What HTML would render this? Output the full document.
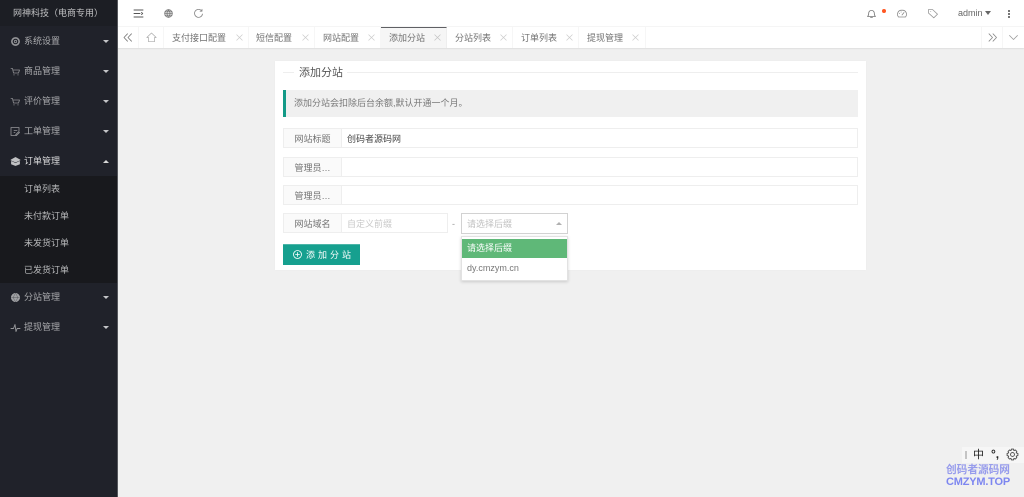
<!DOCTYPE html>
<html lang="zh"><head><meta charset="utf-8"><title>添加分站</title>
<style>
*{box-sizing:border-box}
html,body{margin:0;padding:0;width:1024px;height:497px;overflow:hidden;background:#f0f0f0;font-family:"Liberation Sans","Noto Sans CJK SC",sans-serif;font-size:9px;color:#666}
#wrap{position:absolute;left:0;top:0;width:1024px;height:497px;overflow:hidden;filter:blur(.3px)}
.a{position:absolute;white-space:nowrap}
#side{left:0;top:0;width:118px;height:497px;background:#20222a;border-right:1px solid #55575c}
.mi{position:absolute;left:24px;color:#aaabae;font-size:9px;line-height:12px}
.sub{position:absolute;left:24px;color:#b8b9bb;font-size:9px;line-height:12px}
.car{position:absolute;left:103px;width:0;height:0;border-left:3.5px solid transparent;border-right:3.5px solid transparent;border-top:3.5px solid #c4c5c8}
.car.up{border-top:0;border-bottom:3.5px solid #d8d8d8}
svg{position:absolute;fill:none;stroke-linecap:round;stroke-linejoin:round}
.tab{position:absolute;top:27px;height:21px;line-height:22px;border-right:1px solid #f6f6f6;color:#707070;font-size:9px}
.x{position:absolute;top:7px;width:7px;height:7px}
.lab{position:absolute;left:283px;width:59px;height:20px;background:#fafafa;border:1px solid #eeeeee;color:#707070;font-size:9px;line-height:20px;text-align:center}
.inp{position:absolute;left:341px;height:20px;background:#fff;border:1px solid #eeeeee;font-size:9px;line-height:20px;padding-left:5px;color:#444}
</style></head><body><div id="wrap">

<div class="a" style="left:117px;top:0;width:907px;height:27px;background:#fff;border-bottom:1px solid #f5f5f5"></div>
<div class="a" style="left:117px;top:27px;width:907px;height:21px;background:#fff;box-shadow:0 1px 1px rgba(0,0,0,.07)"></div>

<div id="side" class="a">
  <div class="a" style="left:0;top:0;width:117px;height:26px;background:#1c1e24"></div>
  <div class="a" style="left:13px;top:7px;color:#c0c1c3;font-size:9px;line-height:12px">网神科技（电商专用）</div>

  <svg style="left:10px;top:36px" width="11" height="11" viewBox="0 0 11 11" stroke="#96979a" stroke-width="1.6"><circle cx="5.500" cy="5.500" r="3.600" stroke-dasharray="1.500 .7"/><circle cx="5.500" cy="5.500" r="1.200" stroke-width=".8"/></svg>
  <div class="mi" style="top:35px">系统设置</div><div class="car" style="top:40px"></div>

  <svg style="left:10px;top:66px" width="11" height="11" viewBox="0 0 11 11" stroke="#8e8f92" stroke-width=".8"><path d="M1 2.500h1.500l1 4.500h5l1-3H3"/><path d="M4 8.500v.6M8 8.500v.6"/></svg>
  <div class="mi" style="top:65px">商品管理</div><div class="car" style="top:70px"></div>

  <svg style="left:10px;top:96px" width="11" height="11" viewBox="0 0 11 11" stroke="#8e8f92" stroke-width=".8"><path d="M1 2.500h1.500l1 4.500h5l1-3H3"/><path d="M4 8.500v.6M8 8.500v.6"/></svg>
  <div class="mi" style="top:95px">评价管理</div><div class="car" style="top:100px"></div>

  <svg style="left:10px;top:126px" width="11" height="11" viewBox="0 0 11 11" stroke="#96979a" stroke-width=".8"><path d="M6 9.500H1v-8h8V5"/><path d="M4 4.500h3M4 6.500h1M6.500 9.500l3-3-.8-.8-3 3z"/></svg>
  <div class="mi" style="top:125px">工单管理</div><div class="car" style="top:130px"></div>

  <svg style="left:10px;top:156px" width="11" height="11" viewBox="0 0 11 11" stroke="#c0c1c3" stroke-width=".8"><path d="M5.500 1.500L10 4 5.500 6 1 4z" fill="#c0c1c3"/><path d="M1.500 5.500v2.500l4 1.500 4-1.500V5.500l-4 2z" fill="#c0c1c3"/></svg>
  <div class="mi" style="top:155px;color:#dcdcdd">订单管理</div><div class="car up" style="top:160px"></div>

  <div class="a" style="left:0;top:176px;width:117px;height:107px;background:#18191d"></div>
  <div class="sub" style="top:183px">订单列表</div>
  <div class="sub" style="top:210px">未付款订单</div>
  <div class="sub" style="top:237px">未发货订单</div>
  <div class="sub" style="top:264px">已发货订单</div>

  <svg style="left:10px;top:292px" width="11" height="11" viewBox="0 0 11 11" stroke="#55575c" stroke-width=".5"><circle cx="5.500" cy="5.500" r="4.300" fill="#a0a1a4" stroke="#a0a1a4"/><path d="M1.500 5.500h8M5.500 1.500c-2.500 2.500-2.500 5.500 0 8M5.500 1.500c2.500 2.500 2.500 5.500 0 8"/></svg>
  <div class="mi" style="top:291px">分站管理</div><div class="car" style="top:296px"></div>

  <svg style="left:10px;top:322px" width="11" height="11" viewBox="0 0 11 11" stroke="#96979a" stroke-width=".9"><path d="M1 6.500h2.500L5 2.500l1 7 1.200-3H10"/></svg>
  <div class="mi" style="top:321px">提现管理</div><div class="car" style="top:326px"></div>
</div>

<!-- Header icons -->
<svg style="left:133px;top:8px" width="11" height="11" viewBox="0 0 11 11" stroke="#555" stroke-width=".9"><path d="M1 2h9M1 5.500h6M1 9h9M8.500 4.500l1.200 1-1.200 1"/></svg>
<svg style="left:163px;top:8px" width="11" height="11" viewBox="0 0 11 11" stroke="#777" stroke-width=".8"><circle cx="5.500" cy="5.500" r="3.800"/><path d="M1.700 5.500h7.600M1.900 3.800h7.200M1.900 7.200h7.200M5.500 1.700c-2 2.500-2 5.100 0 7.600M5.500 1.700c2 2.500 2 5.100 0 7.600"/></svg>
<svg style="left:193px;top:8px" width="11" height="11" viewBox="0 0 11 11" stroke="#888" stroke-width=".8"><path d="M8.800 3A4 4 0 1 0 9.500 6"/><path d="M9 1.300V3.200H7.100"/></svg>

<svg style="left:866px;top:8px" width="11" height="11" viewBox="0 0 11 11" stroke="#777" stroke-width=".8"><path d="M1.500 8.500c1-.8 1.200-1.500 1.200-3.300a2.800 2.800 0 0 1 5.600 0c0 1.800.2 2.500 1.200 3.300zM4.500 9.500h2"/></svg>
<div class="a" style="left:882px;top:9px;width:4px;height:4px;border-radius:50%;background:#ff5722"></div>
<svg style="left:896px;top:8px" width="12" height="11" viewBox="0 0 12 11" stroke="#888" stroke-width=".8"><path d="M2.500 9C.5 6.500 1.500 2.200 6 2.200s5.500 4.300 3.500 6.800zM6 7l2-2.500M3.300 5.500h.3M5 4h.3"/></svg>
<svg style="left:927px;top:8px" width="12" height="11" viewBox="0 0 12 11" stroke="#999" stroke-width=".8"><path d="M1.500 1.500h4l5 4.700-3.700 3.600-5.300-4.700zM3.600 3.500h.2"/></svg>
<div class="a" style="left:958px;top:7px;color:#666;font-size:9px;line-height:12px">admin</div>
<div class="a" style="left:985px;top:11px;width:0;height:0;border-left:3.500px solid transparent;border-right:3.500px solid transparent;border-top:4px solid #666"></div>
<div class="a" style="left:1008px;top:10px;width:2px;height:2px;background:#777;box-shadow:0 3px 0 #777,0 6px 0 #777"></div>

<!-- Tabs -->
<svg style="left:123px;top:32px" width="10" height="11" viewBox="0 0 10 11" stroke="#777" stroke-width=".8"><path d="M4.500 1.800L1 5.500l3.500 3.700M8.500 1.800L5 5.500l3.500 3.700"/></svg>
<div class="a" style="left:138px;top:27px;width:1px;height:21px;background:#f6f6f6"></div>
<svg style="left:146px;top:32px" width="11" height="11" viewBox="0 0 11 11" stroke="#aaa" stroke-width=".7"><path d="M.8 5.500L5.500 1l4.700 4.500H8.500v4.200h-6V5.500z"/></svg>
<div class="a" style="left:163px;top:27px;width:1px;height:21px;background:#f6f6f6"></div>

<div class="tab a" style="left:164px;width:85px"><span style="position:absolute;left:8px">支付接口配置</span><svg class="x" style="left:72px" viewBox="0 0 7 7" stroke="#ccc" stroke-width=".7"><path d="M.7.700l5.600 5.600M6.300.700L.7 6.300"/></svg></div>
<div class="tab a" style="left:249px;width:66px"><span style="position:absolute;left:7px">短信配置</span><svg class="x" style="left:53px" viewBox="0 0 7 7" stroke="#ccc" stroke-width=".7"><path d="M.7.700l5.600 5.600M6.300.700L.7 6.300"/></svg></div>
<div class="tab a" style="left:315px;width:66px"><span style="position:absolute;left:8px">网站配置</span><svg class="x" style="left:53px" viewBox="0 0 7 7" stroke="#ccc" stroke-width=".7"><path d="M.7.700l5.600 5.600M6.300.700L.7 6.300"/></svg></div>
<div class="tab a" style="left:381px;width:66px;background:#f6f6f6;border-top:1px solid #5f6064;line-height:20px;border-right:1px solid #eee"><span style="position:absolute;left:8px">添加分站</span><svg class="x" style="left:53px;top:6px" viewBox="0 0 7 7" stroke="#c4c4c4" stroke-width=".7"><path d="M.7.700l5.600 5.600M6.300.700L.7 6.300"/></svg></div>
<div class="tab a" style="left:447px;width:66px"><span style="position:absolute;left:8px">分站列表</span><svg class="x" style="left:53px" viewBox="0 0 7 7" stroke="#ccc" stroke-width=".7"><path d="M.7.700l5.600 5.600M6.300.700L.7 6.300"/></svg></div>
<div class="tab a" style="left:513px;width:66px"><span style="position:absolute;left:8px">订单列表</span><svg class="x" style="left:53px" viewBox="0 0 7 7" stroke="#ccc" stroke-width=".7"><path d="M.7.700l5.600 5.600M6.300.700L.7 6.300"/></svg></div>
<div class="tab a" style="left:579px;width:67px"><span style="position:absolute;left:8px">提现管理</span><svg class="x" style="left:53px" viewBox="0 0 7 7" stroke="#ccc" stroke-width=".7"><path d="M.7.700l5.600 5.600M6.300.700L.7 6.300"/></svg></div>

<div class="a" style="left:981px;top:27px;width:1px;height:21px;background:#f6f6f6"></div>
<div class="a" style="left:1002px;top:27px;width:1px;height:21px;background:#f6f6f6"></div>
<svg style="left:988px;top:32px" width="10" height="11" viewBox="0 0 10 11" stroke="#888" stroke-width=".8"><path d="M1 1.800l3.500 3.700L1 9.200M5 1.800l3.500 3.700L5 9.200"/></svg>
<svg style="left:1008px;top:32px" width="11" height="11" viewBox="0 0 11 11" stroke="#999" stroke-width=".8"><path d="M1.500 3.500l4 4 4-4"/></svg>

<!-- Card -->
<div class="a" style="left:275px;top:61px;width:591px;height:209px;background:#fff;box-shadow:0 0 1px rgba(0,0,0,.04)"></div>
<div class="a" style="left:283px;top:72px;width:11px;height:1px;background:#eeeeee"></div>
<div class="a" style="left:347px;top:72px;width:511px;height:1px;background:#eeeeee"></div>
<div class="a" style="left:299px;top:66px;font-size:11px;line-height:15px;color:#555">添加分站</div>
<div class="a" style="left:283px;top:90px;width:575px;height:27px;background:#f0f0f0;border-left:3px solid #139a87"></div>
<div class="a" style="left:294px;top:97px;font-size:9px;line-height:13px;color:#777">添加分站会扣除后台余额,默认开通一个月。</div>

<div class="lab" style="top:128px">网站标题</div>
<div class="inp" style="top:128px;width:517px">创码者源码网</div>
<div class="lab" style="top:157px">管理员…</div>
<div class="inp" style="top:157px;width:517px"></div>
<div class="lab" style="top:185px">管理员…</div>
<div class="inp" style="top:185px;width:517px"></div>
<div class="lab" style="top:213px">网站域名</div>
<div class="inp" style="top:213px;width:107px;color:#c8c8c8">自定义前缀</div>
<div class="a" style="left:452px;top:218px;color:#999;line-height:12px">-</div>
<div class="a" style="left:461px;top:213px;width:107px;height:21px;background:#fff;border:1px solid #d2d2d2;font-size:9px;line-height:20px;padding-left:5px;color:#c0c0c0">请选择后缀</div>
<div class="a" style="left:556px;top:222px;width:0;height:0;border-left:3.500px solid transparent;border-right:3.500px solid transparent;border-bottom:3.500px solid #b0b0b0"></div>

<div class="a" style="left:461px;top:236px;width:107px;height:45px;background:#fff;border:1px solid #e2e2e2;box-shadow:0 1px 3px rgba(0,0,0,.16)"></div>
<div class="a" style="left:462px;top:239px;width:105px;height:19px;background:#5fb878;color:#fff;font-size:9px;line-height:19px;padding-left:5px">请选择后缀</div>
<div class="a" style="left:467px;top:262px;font-size:9px;line-height:12px;color:#777">dy.cmzym.cn</div>

<div class="a" style="left:283px;top:244px;width:77px;height:21px;background:#16a08f;border-top:1px solid #4cb5a8;color:#fff;font-size:9px;line-height:20px;padding-left:23px;letter-spacing:3px">添加分站</div>
<svg style="left:292px;top:249px" width="11" height="11" viewBox="0 0 11 11" stroke="#fff" stroke-width=".8"><circle cx="5.500" cy="5.500" r="4"/><path d="M5.500 3.500v4M3.500 5.500h4"/></svg>

<!-- IME bar + watermark -->
<div class="a" style="left:962px;top:447px;width:62px;height:16px;background:#f6f6f6"></div>
<div class="a" style="left:965px;top:451px;width:2px;height:8px;background:#c4c4c4"></div>
<div class="a" style="left:973px;top:448px;font-size:11px;line-height:14px;color:#222">中</div>
<div class="a" style="left:991px;top:447px;font-size:12px;line-height:14px;color:#222;font-weight:bold">°,</div>
<svg style="left:1006px;top:448px" width="13" height="13" viewBox="0 0 12 12" stroke="#444" stroke-width=".8"><circle cx="6" cy="6" r="1.800"/><path d="M5 1h2l.3 1.400 1.300-.6 1.400 1.400-.6 1.300L11 5v2l-1.600.5.600 1.300-1.400 1.400-1.300-.6L7 11H5l-.4-1.400-1.300.6L1.900 8.800l.6-1.300L1 7V5l1.500-.5-.6-1.300 1.400-1.400 1.300.6z"/></svg>
<div class="a" style="left:946px;top:463px;font-size:10.670px;line-height:14px;color:#979cec;font-weight:bold">创码者源码网</div>
<div class="a" style="left:946px;top:475px;font-size:11px;line-height:14px;color:#7d86f0;font-weight:bold;letter-spacing:-.2px">CMZYM.TOP</div>

</div></body></html>
